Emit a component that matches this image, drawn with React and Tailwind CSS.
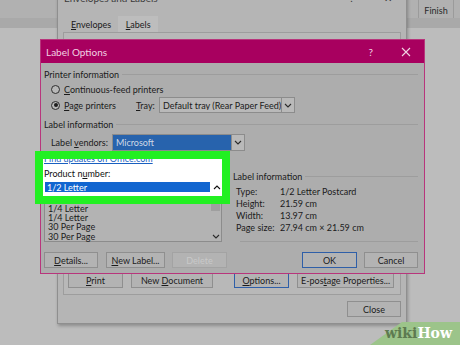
import React from 'react';

const U = ({ children }) => <span className="underline underline-offset-[1px] decoration-[0.5px]">{children}</span>;

function Chevron({ up = false, color = '#2b2b2b' }) {
  return (
    <svg width="8" height="5" viewBox="0 0 8 5" className={up ? 'rotate-180' : ''}>
      <path d="M1 1l3 3 3-3" fill="none" stroke={color} strokeWidth="1.1" />
    </svg>
  );
}

function Btn({ children, className = '' }) {
  return (
    <div className={`h-[16px] flex items-center justify-center border bg-[#b3b3b3] text-[9px] ${className}`}>
      <span className="whitespace-nowrap">{children}</span>
    </div>
  );
}

function GroupTitle({ children }) {
  return (
    <div className="flex items-center gap-[3px] h-[10px]">
      <span className="text-[9px]">{children}</span>
      <div className="flex-1 border-t border-[#9d9d9d]" />
    </div>
  );
}

function Radio({ checked }) {
  return (
    <div className="w-[9px] h-[9px] shrink-0 rounded-full border border-[#2e2e2e] bg-[#b8b8b8] flex items-center justify-center">
      {checked && <div className="w-[4px] h-[4px] rounded-full bg-[#1e1e1e]" />}
    </div>
  );
}

const listRows = ['1/2 Letter', '1/2 Letter', '1/4 Letter', '1/4 Letter', '30 Per Page', '30 Per Page'];

const info = [
  ['Type:', '1/2 Letter Postcard'],
  ['Height:', '21.59 cm'],
  ['Width:', '13.97 cm'],
  ['Page size:', '27.94 cm × 21.59 cm'],
];

export default function App() {
  return (
    <div className="relative w-[460px] h-[345px] overflow-hidden bg-[#bcbcbc] font-['Lato','Noto_Sans',sans-serif] text-[#1b1b1b] leading-none">
      {/* ribbon behind */}
      <div className="h-[18px] bg-[#b1b1b1] flex justify-end">
        <div className="w-[35px] border-l border-[#9b9b9b] flex items-end justify-center pb-[3px] text-[9px] text-[#2a2a2a]">
          Finish
        </div>
        <div className="w-[7px] border-l border-[#9b9b9b]" />
      </div>
      <div className="h-[10px] bg-[#a9a9a9]" />

      {/* Envelopes and Labels window */}
      <div className="absolute left-[57px] top-[-10px] w-[350px] h-[334px] bg-[#b5b5b5] border border-[#8f8f8f] shadow-[1px_2px_3px_rgba(0,0,0,0.25)] flex flex-col">
        <div className="h-[14px] flex items-center px-[6px] text-[10px] text-[#3a3a3a]">
          <span>Envelopes and Labels</span>
          <span className="ml-auto mr-[30px]">?</span>
          <span className="mr-[8px]">✕</span>
        </div>
        <div className="h-[16px] mt-[11px] flex items-end pl-[6px] text-[9px]">
          <div className="h-[16px] px-[7px] flex items-center"><span><U>E</U>nvelopes</span></div>
          <div className="h-[16px] w-[40px] bg-[#bdbdbd] flex items-center justify-center"><span><U>L</U>abels</span></div>
        </div>
        <div className="mx-[5px] h-[263px] bg-[#b8b8b8] border border-[#9d9d9d] flex flex-col justify-end pb-[6px] pl-[4px]">
          <div className="flex">
            <Btn className="w-[55px] border-[#8f8f8f]"><U>P</U>rint</Btn>
            <Btn className="w-[82px] ml-[8px] border-[#8f8f8f]">New <U>D</U>ocument</Btn>
            <Btn className="w-[55px] ml-[21px] border-[#2f5fa8]"><U>O</U>ptions...</Btn>
            <Btn className="w-[97px] ml-[8px] border-[#8f8f8f]">E-pos<U>t</U>age Properties...</Btn>
          </div>
        </div>
        <div className="flex justify-end pr-[5px] mt-[6px]">
          <Btn className="w-[54px] border-[#8f8f8f]">Close</Btn>
        </div>
      </div>

      {/* Label Options dialog */}
      <div className="absolute left-[40px] top-[39px] w-[385px] h-[235px] border border-[#b8357c] bg-[#adadad] flex flex-col">
        <div className="h-[23px] shrink-0 bg-[#a8005f] flex items-center pl-[5px] text-[10px] text-[#f1d3e3]">
          <span>Label Options</span>
          <span className="ml-auto mr-[28px]">?</span>
          <svg width="10" height="10" viewBox="0 0 10 10" className="mr-[13px]">
            <path d="M1 1l8 8M9 1l-8 8" stroke="#f1d3e3" strokeWidth="1.1" />
          </svg>
        </div>

        <div className="flex-1 flex flex-col pl-[3px] pr-[6px] text-[9px]">
          <div className="mt-[6px]"><GroupTitle>Printer information</GroupTitle></div>
          <div className="h-[14px] mt-[3px] flex items-center pl-[7px] gap-[4px]">
            <Radio /><span><U>C</U>ontinuous-feed printers</span>
          </div>
          <div className="h-[16px] mt-[1px] flex items-center pl-[7px]">
            <Radio checked />
            <span className="ml-[4px] w-[72px]"><U>P</U>age printers</span>
            <span className="w-[23px]"><U>T</U>ray:</span>
            <div className="w-[136px] h-[16px] border border-[#8c8c8c] bg-[#b9b9b9] flex items-center">
              <span className="flex-1 pl-[3px] whitespace-nowrap overflow-hidden">Default tray (Rear Paper Feed)</span>
              <div className="w-[13px] h-full border-l border-[#8c8c8c] flex items-center justify-center"><Chevron /></div>
            </div>
          </div>

          <div className="mt-[6px]"><GroupTitle>Label information</GroupTitle></div>
          <div className="h-[17px] mt-[5px] flex items-center pl-[7px]">
            <span className="w-[61px]">Label <U>v</U>endors:</span>
            <div className="w-[133px] h-[17px] border border-[#8c8c8c] bg-[#b9b9b9] flex items-center">
              <div className="flex-1 h-full bg-[#2763ad] text-[#cfd9e6] flex items-center pl-[3px]">Microsoft</div>
              <div className="w-[13px] h-full border-l border-[#8c8c8c] flex items-center justify-center"><Chevron /></div>
            </div>
          </div>

          <div className="flex mt-[8px] gap-[11px]">
            {/* left column (top part is shown in the highlight) */}
            <div className="w-[178px] flex flex-col">
              <div className="h-[10px] invisible">Find updates on Office.com</div>
              <div className="h-[10px] mt-[2px] invisible">Product number:</div>
              <div className="h-[58px] mt-[3px] border border-[#8c8c8c] bg-[#b3b3b3] flex">
                <div className="flex-1 flex flex-col">
                  {listRows.map((r, i) => (
                    <div key={i} className={`h-[9.7px] flex items-center pl-[3px] ${i < 2 ? 'invisible' : ''}`}>{r}</div>
                  ))}
                </div>
                <div className="w-[11px] flex flex-col items-center">
                  <div className="h-[10px]" />
                  <div className="mt-[9px] w-[9px] h-[7px] bg-[#9f9f9f]" />
                  <div className="mt-auto h-[10px] flex items-center"><Chevron /></div>
                </div>
              </div>
            </div>

            {/* right column */}
            <div className="flex-1 flex flex-col">
              <div className="mt-[12px]"><GroupTitle>Label information</GroupTitle></div>
              <div className="flex flex-col pl-[3px] mt-[4px]">
                {info.map(([k, v]) => (
                  <div key={k} className="h-[12px] flex items-center">
                    <span className="w-[44px]">{k}</span>
                    <span>{v}</span>
                  </div>
                ))}
              </div>
              <div className="mt-[8px] ml-[7px] border-t border-[#9d9d9d]" />
            </div>
          </div>

          <div className="flex mt-[10px]">
            <Btn className="w-[54px] border-[#8f8f8f]"><U>D</U>etails...</Btn>
            <Btn className="w-[59px] ml-[8px] border-[#8f8f8f]"><U>N</U>ew Label...</Btn>
            <Btn className="w-[55px] ml-[7px] border-[#a3a3a3] text-[#c9c9c9]">Delete</Btn>
            <Btn className="w-[55px] ml-auto border-[#2f5fa8] border-[1.5px]">OK</Btn>
            <Btn className="w-[54px] ml-[7px] border-[#8f8f8f]">Cancel</Btn>
          </div>
        </div>
      </div>

      {/* green highlight */}
      <div className="absolute left-[35px] top-[151px] w-[195px] h-[53px] border-[8px] border-[#22f022] bg-white overflow-hidden text-[9px]">
        <div className="flex flex-col pl-[1px] mt-[-5px]">
          <div className="h-[10px] text-[#1a5fc0] underline">Find updates on Office.com</div>
          <div className="h-[10px] mt-[5px] text-[#111]"><span>Product n<U>u</U>mber:</span></div>
          <div className="h-[10px] mt-[3px] flex items-center">
            <div className="ml-[1px] w-[165px] h-full bg-[#1266d0] text-white flex items-center pl-[2px]">1/2 Letter</div>
            <div className="ml-[3px]"><Chevron up color="#111" /></div>
          </div>
        </div>
      </div>

      {/* wikiHow watermark */}
      <svg className="absolute left-0 top-0" width="460" height="345" viewBox="0 0 460 345">
        <polygon points="402,322 460,322 460,345 370,345" fill="#9cc48a" />
      </svg>
      <div className="absolute left-[385px] top-[326px] font-['DejaVu_Serif',serif] font-bold text-[14px] leading-none">
        <span className="text-[#5d7a50]">wiki</span><span className="text-white">How</span>
      </div>
    </div>
  );
}
